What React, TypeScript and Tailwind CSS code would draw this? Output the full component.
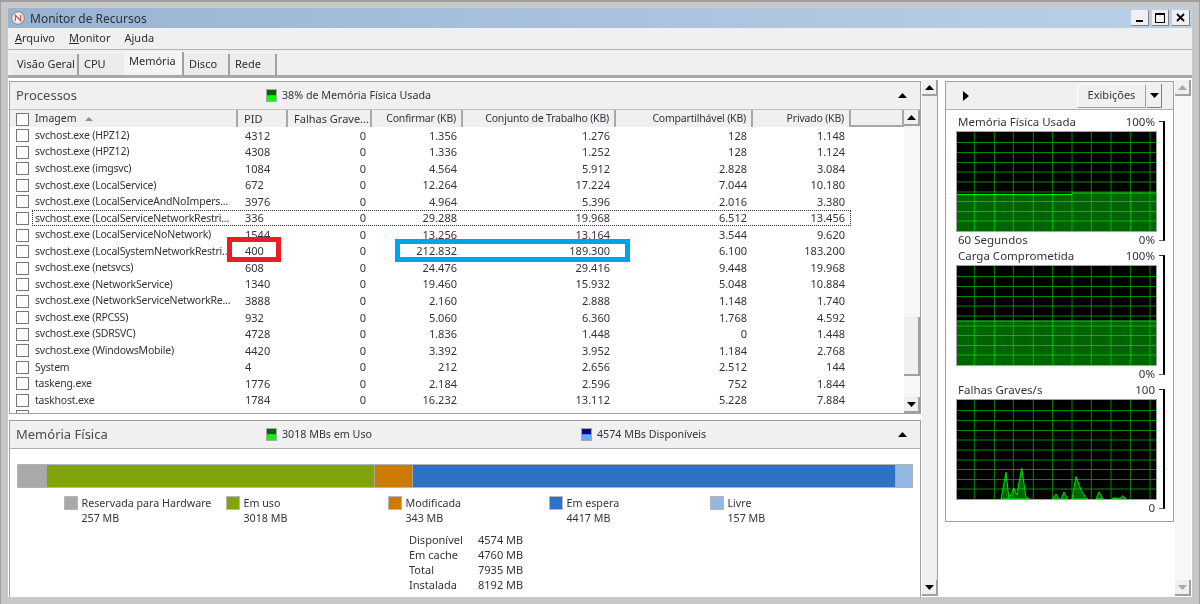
const rowGrid = "grid grid-cols-[228px_50px_84px_91px_153px_137px_98px]"

const processes = [
  ["svchost.exe (HPZ12)", "4312", "0", "1.356", "1.276", "128", "1.148"],
  ["svchost.exe (HPZ12)", "4308", "0", "1.336", "1.252", "128", "1.124"],
  ["svchost.exe (imgsvc)", "1084", "0", "4.564", "5.912", "2.828", "3.084"],
  ["svchost.exe (LocalService)", "672", "0", "12.264", "17.224", "7.044", "10.180"],
  ["svchost.exe (LocalServiceAndNoImpers...", "3976", "0", "4.964", "5.396", "2.016", "3.380"],
  ["svchost.exe (LocalServiceNetworkRestri...", "336", "0", "29.288", "19.968", "6.512", "13.456"],
  ["svchost.exe (LocalServiceNoNetwork)", "1544", "0", "13.256", "13.164", "3.544", "9.620"],
  ["svchost.exe (LocalSystemNetworkRestri...", "400", "0", "212.832", "189.300", "6.100", "183.200"],
  ["svchost.exe (netsvcs)", "608", "0", "24.476", "29.416", "9.448", "19.968"],
  ["svchost.exe (NetworkService)", "1340", "0", "19.460", "15.932", "5.048", "10.884"],
  ["svchost.exe (NetworkServiceNetworkRe...", "3888", "0", "2.160", "2.888", "1.148", "1.740"],
  ["svchost.exe (RPCSS)", "932", "0", "5.060", "6.360", "1.768", "4.592"],
  ["svchost.exe (SDRSVC)", "4728", "0", "1.836", "1.448", "0", "1.448"],
  ["svchost.exe (WindowsMobile)", "4420", "0", "3.392", "3.952", "1.184", "2.768"],
  ["System", "4", "0", "212", "2.656", "2.512", "144"],
  ["taskeng.exe", "1776", "0", "2.184", "2.596", "752", "1.844"],
  ["taskhost.exe", "1784", "0", "16.232", "13.112", "5.228", "7.884"],
  ["", "", "", "", "", "", ""],
]

const Arrow = ({ dir = "up", muted = false }: { dir?: "up" | "down"; muted?: boolean }) => (
  <svg width="9" height="5" viewBox="0 0 9 5" className={muted ? "text-[#a8a8a8]" : "text-black"}>
    <polygon points={dir === "up" ? "4.5,0 9,5 0,5" : "0,0 9,0 4.5,5"} fill="currentColor" />
  </svg>
)

const ScrollButton = ({ dir, muted }: { dir: "up" | "down"; muted?: boolean }) => (
  <div className="w-[16px] h-[16px] shrink-0 bg-[#f0f0f0] border-r-2 border-b-2 border-[#a0a0a0] flex items-center justify-center">
    <Arrow dir={dir} muted={muted} />
  </div>
)

const Checkbox = () => (
  <span className="block w-[13px] h-[13px] border-[1.5px] border-[#777777] bg-white shrink-0" />
)

const Indicator = ({ dark, light }: { dark: string; light: string }) => (
  <svg width="11" height="13" viewBox="0 0 11 13" className="shrink-0">
    <rect width="11" height="13" fill="#a8a8a8" />
    <rect x="1" y="1" width="9" height="5.5" fill={dark} />
    <rect x="1" y="6.5" width="9" height="5.5" fill={light} />
  </svg>
)

const TitleBar = () => (
  <div className="h-[20px] shrink-0 flex items-center bg-gradient-to-r from-[#9ab3d2] to-[#b8d0e8] pl-[3px] pr-[2px]">
    <svg width="14" height="14" viewBox="0 0 14 14" className="shrink-0">
      <circle cx="7" cy="7" r="6.5" fill="#d8d4cc" stroke="#8a8a8a" />
      <circle cx="7" cy="7" r="4.6" fill="#ffffff" />
      <path d="M4.4 10V4.2L9.6 9.8V4" fill="none" stroke="#d0505a" strokeWidth="1.3" />
    </svg>
    <span className="ml-[5px] pt-px text-[12px] text-[#2b3038]">Monitor de Recursos</span>
    <div className="ml-auto flex items-center gap-[3px]">
      <div className="w-[18px] h-[16px] bg-[#f0f0f0] border-r border-b border-[#808080] flex items-end justify-center pb-[3px]">
        <span className="block w-[7px] h-[2px] bg-black" />
      </div>
      <div className="w-[17px] h-[16px] bg-[#f0f0f0] border-r border-b border-[#808080] flex items-center justify-center">
        <span className="block w-[10px] h-[10px] border border-black border-t-2" />
      </div>
      <div className="w-[18px] h-[16px] bg-[#f0f0f0] border-r border-b border-[#808080] flex items-center justify-center">
        <svg width="9" height="9" viewBox="0 0 9 9">
          <path d="M1 1L8 8M8 1L1 8" stroke="#000000" strokeWidth="1.8" />
        </svg>
      </div>
    </div>
  </div>
)

const MenuBar = () => (
  <div className="h-[22px] shrink-0 flex items-center pl-[7px] gap-[14px] text-[11px] text-[#2b2b33] border-b border-[#b4b4b4]">
    <span><span className="underline">A</span>rquivo</span>
    <span><span className="underline">M</span>onitor</span>
    <span>A<span className="underline">j</span>uda</span>
  </div>
)

const tabs = [
  { label: "Visão Geral", width: "w-[67px]", edge: "border-r-2" },
  { label: "CPU", width: "w-[45px]", edge: "" },
  { label: "Memória", width: "w-[60px]", edge: "border-r-2", active: true },
  { label: "Disco", width: "w-[46px]", edge: "border-r-2" },
  { label: "Rede", width: "w-[47px]", edge: "border-r-2" },
]

const Tabs = () => (
  <div className="h-[28px] shrink-0 flex items-end pl-[4px] border-b-[3px] border-[#a8a8a8]">
    {tabs.map((tab) => (
      <div
        key={tab.label}
        className={`${tab.width} ${tab.edge} ${tab.active ? "h-[23px] pb-[4px] bg-[#f4f4f4]" : "h-[21px] bg-[#ececec]"} flex items-center pl-[5px] text-[11px] whitespace-nowrap text-[#2b2b33] border-[#a0a0a0]`}
      >
        {tab.label}
      </div>
    ))}
  </div>
)

const PanelHeader = ({ title, indicators, height }: { title: string; indicators: { text: string; dark: string; light: string }[]; height: string }) => (
  <div className={`${height} shrink-0 bg-[#f0f0f0] grid grid-cols-[256px_315px_1fr_24px] items-center`}>
    <span className="pl-[6px] text-[13px] text-[#4a4a55]">{title}</span>
    {indicators.map((item) => (
      <span key={item.text} className="flex items-center gap-[5px] text-[10.7px] text-[#33333b]">
        <Indicator dark={item.dark} light={item.light} />
        {item.text}
      </span>
    ))}
    {indicators.length === 1 && <span />}
    <span className="ml-[2px]"><Arrow /></span>
  </div>
)

const headerLabels = ["PID", "Falhas Grave...", "Confirmar (KB)", "Conjunto de Trabalho (KB)", "Compartilhável (KB)", "Privado (KB)"]

const ProcessTable = () => (
  <div className="flex-1 min-h-0 flex flex-col">
    <div className="h-[18px] shrink-0 flex bg-[#f0f0f0] border-t border-[#c0c0c0] text-[#33333b]">
      <div className={`${rowGrid} w-[841px]`}>
        <div className="flex items-center pl-[6px] pt-px border-r-2 border-b-2 border-[#a8a8a8] text-[10.5px]">
          <Checkbox />
          <span className="ml-[6px]">Imagem</span>
          <span className="ml-[9px]"><svg width="8" height="4" viewBox="0 0 8 4"><polygon points="4,0 8,4 0,4" fill="#909090" /></svg></span>
        </div>
        {headerLabels.map((label, i) => (
          <div key={label} className={`flex items-center pt-px border-r-2 border-b-2 border-[#a8a8a8] whitespace-nowrap ${i < 2 ? "justify-start pl-[6px] text-[11px]" : "justify-end pr-[5px] text-[10.5px] tracking-[-0.2px]"}`}>
            {label}
          </div>
        ))}
      </div>
      <div className="flex-1 border-r-2 border-b-2 border-[#a8a8a8]" />
      <ScrollButton dir="up" />
    </div>
    <div className="flex-1 min-h-0 flex bg-white">
      <div className="flex-1 relative overflow-hidden text-[11px] text-[#33333b]">
        {processes.map((p, i) => (
          <div key={i} className={`${rowGrid} relative h-[16.56px] pt-[0.5px] items-center`}>
            <div className="flex items-center pl-[6px] whitespace-nowrap overflow-hidden text-[10.5px] tracking-[-0.2px]">
              <Checkbox />
              <span className="ml-[6px]">{p[0]}</span>
            </div>
            <span className="pl-[7px]">{p[1]}</span>
            {p.slice(2).map((v, j) => (
              <span key={j} className="text-right pr-[6px]">{v}</span>
            ))}
            {i === 5 && <span className="absolute left-[22px] top-0 bottom-0 w-[819px] border border-dotted border-[#333333]" />}
          </div>
        ))}
        <span className="absolute left-[217px] top-[110px] w-[54px] h-[25px] border-[5px] border-[#ed1c24]" />
        <span className="absolute left-[385px] top-[112px] w-[235px] h-[23px] border-[5px] border-[#00a2e8]" />
      </div>
      <div className="w-[16px] flex flex-col bg-[#f7f7f7]">
        <div className="h-[190px] shrink-0" />
        <div className="h-[59px] shrink-0 bg-[#f0f0f0] border-r-2 border-b-2 border-[#a0a0a0]" />
        <div className="flex-1" />
        <ScrollButton dir="down" />
      </div>
    </div>
  </div>
)

const legend = [
  { name: "Reservada para Hardware", value: "257 MB", color: "bg-[#a9a9a9]" },
  { name: "Em uso", value: "3018 MB", color: "bg-[#7fa30b]" },
  { name: "Modificada", value: "343 MB", color: "bg-[#cc7a00]" },
  { name: "Em espera", value: "4417 MB", color: "bg-[#2f72c4]" },
  { name: "Livre", value: "157 MB", color: "bg-[#95b7e3]" },
]

const stats = [
  ["Disponível", "4574 MB"],
  ["Em cache", "4760 MB"],
  ["Total", "7935 MB"],
  ["Instalada", "8192 MB"],
]

const MemoryPanel = () => (
  <div className="flex-1 min-h-0 border-l border-t border-r border-[#a0a0a0] flex flex-col bg-white">
    <PanelHeader
      title="Memória Física"
      height="h-[27px]"
      indicators={[
        { text: "3018 MBs em Uso", dark: "#006400", light: "#00ff00" },
        { text: "4574 MBs Disponíveis", dark: "#0000a0", light: "#66aaff" },
      ]}
    />
    <div className="border-t border-[#b0b0b0] pt-[15px] text-[10.7px] text-[#33333b]">
      <div className="ml-[7px] w-[896px] h-[24px] flex gap-px bg-[#a8a8a8] border border-[#b4b4b4]">
        <div className="w-[28px] bg-[#a9a9a9]" />
        <div className="w-[327px] bg-[#7fa30b]" />
        <div className="w-[37px] bg-[#cc7a00]" />
        <div className="w-[482px] bg-[#2f72c4]" />
        <div className="flex-1 bg-[#95b7e3]" />
      </div>
      <div className="mt-[8px] ml-[54px] grid grid-cols-[162px_162px_161px_161px_160px]">
        {legend.map((item) => (
          <div key={item.name} className="flex gap-[3.5px]">
            <span className={`w-[14px] h-[14px] shrink-0 border border-[#b8b8b8] ${item.color}`} />
            <div className="leading-[15px]">
              <div>{item.name}</div>
              <div>{item.value}</div>
            </div>
          </div>
        ))}
      </div>
      <div className="mt-[6px] ml-[399px] grid grid-cols-[69px_80px] leading-[15px] text-[11px]">
        {stats.map(([label, value]) => (
          <div key={label} className="contents">
            <span>{label}</span>
            <span>{value}</span>
          </div>
        ))}
      </div>
    </div>
  </div>
)

const vLines = [17.3, 37.3, 56.3, 76.3, 95.7, 115, 134.3, 154, 173.3, 193]
const hLines = [10.5, 20.5, 30.5, 40, 50, 60, 69.5, 79.5, 89]

const Graph = ({ level, spikes }: { level?: string; spikes?: string[] }) => (
  <div className="w-[201px] h-[101px] border border-[#a0a0a0] bg-black">
    <svg width="199" height="99" viewBox="0 0 199 99" className="block">
      {level && <polygon points={level} fill="#006400" />}
      {spikes?.map((s) => <polygon key={s} points={s} fill="#006400" stroke="#00e000" strokeWidth="1" />)}
      <g className="mix-blend-screen" stroke="#008a00" strokeWidth="1">
        {vLines.map((x) => <line key={x} x1={x} x2={x} y1="0" y2="99" />)}
        {hLines.map((y) => <line key={y} x1="0" x2="199" y1={y} y2={y} />)}
      </g>
      {level && <polyline points={level.split(" ").slice(0, -2).join(" ")} fill="none" stroke="#00e800" strokeWidth="1" />}
    </svg>
  </div>
)

const GraphSection = ({ title, max, footerLeft, footerRight, level, spikes }: { title: string; max: string; footerLeft?: string; footerRight: string; level?: string; spikes?: string[] }) => (
  <div className="h-[134px] flex text-[#33333b]">
    <div className="w-[201px]">
      <div className="h-[17px] pb-[2px] flex items-center justify-between px-[2px] text-[11.5px]">
        <span>{title}</span>
        <span>{max}</span>
      </div>
      <Graph level={level} spikes={spikes} />
      <div className="h-[16px] flex items-center justify-between px-[2px] text-[11.5px]">
        <span>{footerLeft}</span>
        <span>{footerRight}</span>
      </div>
    </div>
    <div className="ml-[2px] w-[6px] my-[7px] border-t border-r-2 border-b border-t-[#333333] border-r-black border-b-[#666666]" />
  </div>
)

const faultSpikes = [
  "44,99 49,72 52,99 56.7,88 59.7,95 64.7,68 69,97 72,99",
  "95.7,99 99,94 102,99",
  "104,99 107,92 110.7,99",
  "115,99 119,76.7 124,90 129,98 131,99",
  "139,99 142,92 146,99",
  "155.7,99 155.7,98 159.7,98 162,99",
  "162,99 166,95.7 169,99",
]

const GraphsPanel = () => (
  <div className="flex flex-col h-[441px] border border-[#a0a0a0] bg-white">
    <div className="h-[28px] shrink-0 bg-[#f0f0f0] border-b border-[#b0b0b0] flex items-center">
      <svg width="6" height="10" viewBox="0 0 6 10" className="ml-[17px]">
        <polygon points="0,0 6,5 0,10" fill="#000000" />
      </svg>
      <div className="ml-auto mr-[11px] flex gap-px text-[11px] text-[#33333b]">
        <div className="w-[69px] h-[24px] flex items-center justify-center bg-[#f0f0f0] border-r border-b border-[#a0a0a0] border-l border-l-white border-t border-t-white">Exibições</div>
        <div className="w-[15px] h-[24px] flex items-center justify-center bg-[#f0f0f0] border-r border-b border-[#808080]">
          <Arrow dir="down" />
        </div>
      </div>
    </div>
    <div className="pt-[4px] pl-[10px]">
      <GraphSection title="Memória Física Usada" max="100%" footerLeft="60 Segundos" footerRight="0%" level="0,62.5 115,62.5 115,61 199,61 199,99 0,99" />
      <GraphSection title="Carga Comprometida" max="100%" footerRight="0%" level="0,55 199,55 199,99 0,99" />
      <GraphSection title="Falhas Graves/s" max="100" footerRight="0" spikes={faultSpikes} />
    </div>
  </div>
)

const OuterScrollbar = ({ muted, thumb }: { muted?: boolean; thumb?: boolean }) => (
  <div className={`w-[16px] h-[516px] -mt-px flex flex-col justify-between ${thumb ? "bg-[#f0f0f0] border-r border-[#a0a0a0]" : "bg-[#f7f7f7]"}`}>
    <ScrollButton dir="up" muted={muted} />
    <ScrollButton dir="down" muted={muted} />
  </div>
)

export default function App() {
  return (
    <div className="w-[1200px] h-[604px] overflow-hidden bg-[#c8c8c8] border-t-2 border-l border-r border-[#a0a0a0] pt-[6px] pl-[7px] pr-[7px] flex flex-col font-['Noto_Sans','DejaVu_Sans',sans-serif]">
      <div className="w-[1184px] h-[589px] shrink-0 flex flex-col bg-[#f0f0f0]">
        <TitleBar />
        <MenuBar />
        <Tabs />
        <div className="flex-1 min-h-0 flex pt-[3px] pl-[1px] bg-white">
          <div className="w-[912px] h-[516px] flex flex-col gap-[6px]">
            <div className="h-[333px] shrink-0 border border-[#a0a0a0] flex flex-col">
              <PanelHeader
                title="Processos"
                height="h-[27px]"
                indicators={[{ text: "38% de Memória Física Usada", dark: "#006400", light: "#00ff00" }]}
              />
              <ProcessTable />
            </div>
            <MemoryPanel />
          </div>
          <div className="ml-[1px]"><OuterScrollbar thumb /></div>
          <div className="ml-[7px] w-[229px]"><GraphsPanel /></div>
          <div className="ml-[1px]"><OuterScrollbar muted /></div>
        </div>
      </div>
    </div>
  )
}
